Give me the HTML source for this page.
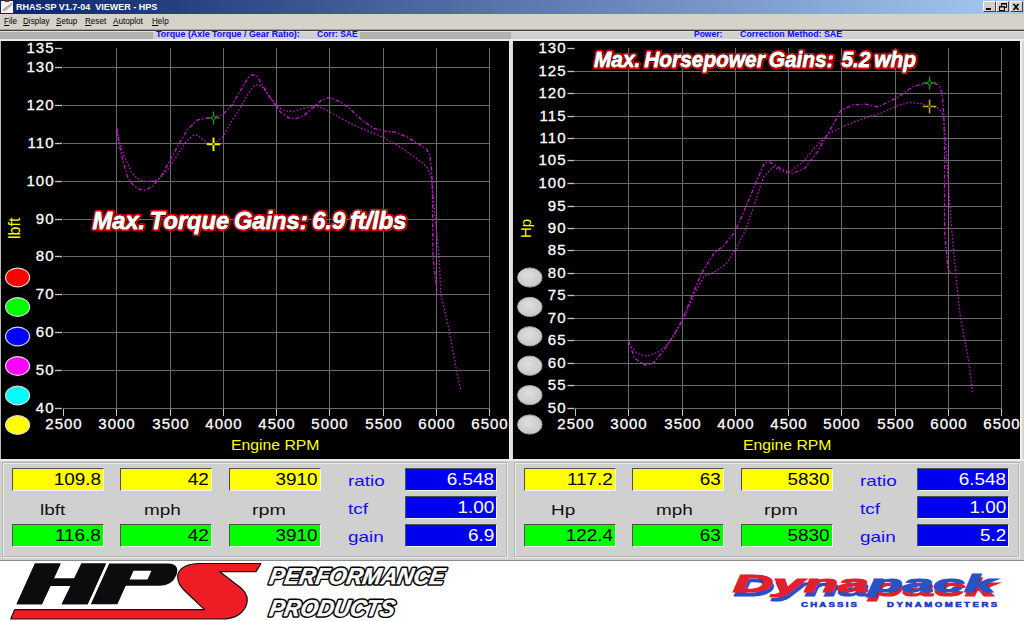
<!DOCTYPE html>
<html><head><meta charset="utf-8">
<style>
*{margin:0;padding:0;box-sizing:border-box}
html,body{width:1024px;height:621px;overflow:hidden;background:#fff;font-family:"Liberation Sans", sans-serif}
.abs{position:absolute}
.yl{position:absolute;width:41px;text-align:right;color:#fff;font-size:15px;line-height:18px;letter-spacing:1px;-webkit-text-stroke:0.3px #fff}
.xl{position:absolute;width:51px;text-align:center;color:#fff;font-size:15px;line-height:18px;letter-spacing:1px;-webkit-text-stroke:0.3px #fff}
.box{position:absolute;height:23px;border-top:1px solid #505050;border-left:1px solid #505050;border-bottom:1px solid #f4f4f4;border-right:1px solid #f4f4f4;text-align:right;font-size:16px;line-height:21px;padding-right:2px;color:#000}
.box span{display:inline-block;transform:scaleX(1.18);transform-origin:100% 50%}
.lab span,.blab span{display:inline-block;transform:scaleX(1.26);transform-origin:0 50%}
.y{background:#ffff00} .g{background:#00ff00} .b{background:#0000f0;color:#fff}
.lab{position:absolute;font-size:15px;line-height:18px;color:#111}
.blab{position:absolute;font-size:15px;line-height:18px;color:#0e0ef8}
.menu span{position:absolute;top:15px;font-size:9px;line-height:12px;color:#000;transform:scaleX(0.9);transform-origin:0 0}
.menu u{text-decoration:none;border-bottom:1px solid #000;line-height:8px;display:inline-block}
.hdr{position:absolute;top:30.3px;transform-origin:0 0;height:8px;font-size:8.5px;font-weight:bold;line-height:8px;color:#0a0aff;white-space:pre}
.big{position:absolute;font-weight:bold;font-style:italic;color:#fff;white-space:pre;
  text-shadow:0 0 1px #000, 1.5px 0 0 #d00000,-1.5px 0 0 #d00000,0 1.5px 0 #d00000,0 -1.5px 0 #d00000,1px 1px 0 #d00000,-1px -1px 0 #d00000,1px -1px 0 #d00000,-1px 1px 0 #d00000, 2px 1px 0 #a00000, -2px 1px 0 #a00000, 1px 2px 0 #a00000,-1px 2px 0 #a00000}
</style></head><body>

<div class="abs" style="left:0;top:0;width:1024px;height:14px;background:linear-gradient(90deg,#0a246a 0%,#a6caf0 100%)"></div>
<div class="abs" style="left:1px;top:1px;width:12px;height:12px;background:#f8f6f4"></div><div class="abs" style="left:5px;top:0;width:4px;height:2px;background:#902018"></div>
<svg class="abs" style="left:0;top:0" width="14" height="14"><polyline points="2.5,10.5 6,8 9,6 12,3" fill="none" stroke="#f08080" stroke-width="1.2"/><polyline points="3,9.5 7,6.5 10,5" fill="none" stroke="#90c890" stroke-width="1"/><polyline points="4,11 8,8.5 12,4.5" fill="none" stroke="#9090e0" stroke-width="1"/></svg>
<div class="abs" style="left:16px;top:0.8px;font-size:9px;line-height:12px;font-weight:bold;color:#fff;white-space:pre">RHAS-SP V1.7-04  VIEWER - HPS</div>

<div class="abs" style="left:983px;top:1px;width:13px;height:11px;background:#d4d0c8;border-top:1px solid #fff;border-left:1px solid #fff;border-right:1px solid #404040;border-bottom:1px solid #404040"></div>
<div class="abs" style="left:996px;top:1px;width:13px;height:11px;background:#d4d0c8;border-top:1px solid #fff;border-left:1px solid #fff;border-right:1px solid #404040;border-bottom:1px solid #404040"></div>
<div class="abs" style="left:1010px;top:1px;width:13px;height:11px;background:#d4d0c8;border-top:1px solid #fff;border-left:1px solid #fff;border-right:1px solid #404040;border-bottom:1px solid #404040"></div>
<svg class="abs" style="left:983px;top:1px" width="41" height="12">
<rect x="3" y="7" width="5" height="2" fill="#000"/>
<rect x="16.5" y="5.5" width="5" height="4" fill="none" stroke="#000" stroke-width="1"/><line x1="16" y1="6" x2="22" y2="6" stroke="#000"/>
<polyline points="18.5,5.5 18.5,2.5 23.5,2.5 23.5,6.5 22,6.5" fill="none" stroke="#000"/><line x1="18" y1="3" x2="24" y2="3" stroke="#000"/>
<path d="M30.5,3 L35.5,9 M35.5,3 L30.5,9" stroke="#000" stroke-width="1.6"/>
</svg>

<div class="abs" style="left:0;top:14px;width:1024px;height:16px;background:#d6d2ca"></div>
<div class="abs" style="left:0;top:29px;width:1024px;height:1px;background:#a8a49c"></div>
<div class="abs" style="left:0;top:30px;width:1024px;height:1px;background:#404040"></div>
<div class="menu">
<span style="left:4px"><u>F</u>ile</span>
<span style="left:22.5px"><u>D</u>isplay</span>
<span style="left:56px"><u>S</u>etup</span>
<span style="left:84.7px"><u>R</u>eset</span>
<span style="left:112.5px"><u>A</u>utoplot</span>
<span style="left:151.5px"><u>H</u>elp</span>
</div>
<div class="abs" style="left:0;top:31px;width:1024px;height:9px;background:#d0d0d0"></div>
<div class="abs" style="left:0;top:31px;width:1024px;height:1px;background:#e0e0e0"></div>
<div class="abs" style="left:0;top:32px;width:153px;height:7px;background:#b2b2b2"></div>
<div class="abs" style="left:360px;top:32px;width:151px;height:7px;background:#b2b2b2"></div>
<div class="hdr" style="left:156px;transform:scaleX(1.045)">Torque (Axle Torque / Gear Ratio):</div>
<div class="hdr" style="left:317px">Corr: SAE</div>
<div class="hdr" style="left:694px">Power:</div>
<div class="hdr" style="left:740px;transform:scaleX(1.04)">Correction Method: SAE</div>
<div class="abs" style="left:0;top:39px;width:1024px;height:421px;background:#d4d4d4"></div>
<div class="abs" style="left:0;top:39px;width:1024px;height:2px;background:#ececec"></div>
<div class="abs" style="left:0;top:41px;width:1px;height:419px;background:#b8b8b8"></div>
<div class="abs" style="left:1020px;top:41px;width:2px;height:419px;background:#f0f0f0"></div>
<div class="abs" style="left:1px;top:41px;width:508px;height:418px;background:#000"></div>
<div class="abs" style="left:513px;top:41px;width:507px;height:418px;background:#000"></div>
<div class="abs" style="left:509px;top:41px;width:3px;height:418px;background:#e4e4e4"></div>
<svg class="abs" style="left:0;top:0" width="1024" height="621">
<line x1="63.0" y1="408.5" x2="490.0" y2="408.5" stroke="#6a6a6a" stroke-width="1"/>
<line x1="63.0" y1="370.5" x2="490.0" y2="370.5" stroke="#6a6a6a" stroke-width="1"/>
<line x1="63.0" y1="332.5" x2="490.0" y2="332.5" stroke="#6a6a6a" stroke-width="1"/>
<line x1="63.0" y1="294.5" x2="490.0" y2="294.5" stroke="#6a6a6a" stroke-width="1"/>
<line x1="63.0" y1="256.5" x2="490.0" y2="256.5" stroke="#6a6a6a" stroke-width="1"/>
<line x1="63.0" y1="219.5" x2="490.0" y2="219.5" stroke="#6a6a6a" stroke-width="1"/>
<line x1="63.0" y1="181.5" x2="490.0" y2="181.5" stroke="#6a6a6a" stroke-width="1"/>
<line x1="63.0" y1="143.5" x2="490.0" y2="143.5" stroke="#6a6a6a" stroke-width="1"/>
<line x1="63.0" y1="105.5" x2="490.0" y2="105.5" stroke="#6a6a6a" stroke-width="1"/>
<line x1="63.0" y1="67.5" x2="490.0" y2="67.5" stroke="#6a6a6a" stroke-width="1"/>
<line x1="55" y1="48.5" x2="62" y2="48.5" stroke="#c4c4c4" stroke-width="1.3"/>
<line x1="55" y1="408.5" x2="62" y2="408.5" stroke="#c4c4c4" stroke-width="1.3"/>
<line x1="55" y1="370.5" x2="62" y2="370.5" stroke="#c4c4c4" stroke-width="1.3"/>
<line x1="55" y1="332.5" x2="62" y2="332.5" stroke="#c4c4c4" stroke-width="1.3"/>
<line x1="55" y1="294.5" x2="62" y2="294.5" stroke="#c4c4c4" stroke-width="1.3"/>
<line x1="55" y1="256.5" x2="62" y2="256.5" stroke="#c4c4c4" stroke-width="1.3"/>
<line x1="55" y1="219.5" x2="62" y2="219.5" stroke="#c4c4c4" stroke-width="1.3"/>
<line x1="55" y1="181.5" x2="62" y2="181.5" stroke="#c4c4c4" stroke-width="1.3"/>
<line x1="55" y1="143.5" x2="62" y2="143.5" stroke="#c4c4c4" stroke-width="1.3"/>
<line x1="55" y1="105.5" x2="62" y2="105.5" stroke="#c4c4c4" stroke-width="1.3"/>
<line x1="55" y1="67.5" x2="62" y2="67.5" stroke="#c4c4c4" stroke-width="1.3"/>
<line x1="63.5" y1="408.0" x2="63.5" y2="408.0" stroke="#6a6a6a" stroke-width="1"/>
<line x1="63.5" y1="409.0" x2="63.5" y2="416.0" stroke="#c4c4c4" stroke-width="1"/>
<line x1="116.5" y1="48.0" x2="116.5" y2="408.0" stroke="#6a6a6a" stroke-width="1"/>
<line x1="116.5" y1="409.0" x2="116.5" y2="416.0" stroke="#c4c4c4" stroke-width="1"/>
<line x1="170.5" y1="48.0" x2="170.5" y2="408.0" stroke="#6a6a6a" stroke-width="1"/>
<line x1="170.5" y1="409.0" x2="170.5" y2="416.0" stroke="#c4c4c4" stroke-width="1"/>
<line x1="223.5" y1="48.0" x2="223.5" y2="408.0" stroke="#6a6a6a" stroke-width="1"/>
<line x1="223.5" y1="409.0" x2="223.5" y2="416.0" stroke="#c4c4c4" stroke-width="1"/>
<line x1="276.5" y1="48.0" x2="276.5" y2="408.0" stroke="#6a6a6a" stroke-width="1"/>
<line x1="276.5" y1="409.0" x2="276.5" y2="416.0" stroke="#c4c4c4" stroke-width="1"/>
<line x1="329.5" y1="48.0" x2="329.5" y2="408.0" stroke="#6a6a6a" stroke-width="1"/>
<line x1="329.5" y1="409.0" x2="329.5" y2="416.0" stroke="#c4c4c4" stroke-width="1"/>
<line x1="383.5" y1="48.0" x2="383.5" y2="408.0" stroke="#6a6a6a" stroke-width="1"/>
<line x1="383.5" y1="409.0" x2="383.5" y2="416.0" stroke="#c4c4c4" stroke-width="1"/>
<line x1="436.5" y1="48.0" x2="436.5" y2="408.0" stroke="#6a6a6a" stroke-width="1"/>
<line x1="436.5" y1="409.0" x2="436.5" y2="416.0" stroke="#c4c4c4" stroke-width="1"/>
<line x1="489.5" y1="48.0" x2="489.5" y2="408.0" stroke="#6a6a6a" stroke-width="1"/>
<line x1="489.5" y1="409.0" x2="489.5" y2="416.0" stroke="#c4c4c4" stroke-width="1"/>
<line x1="575.0" y1="408.5" x2="1002.0" y2="408.5" stroke="#6a6a6a" stroke-width="1"/>
<line x1="575.0" y1="385.5" x2="1002.0" y2="385.5" stroke="#6a6a6a" stroke-width="1"/>
<line x1="575.0" y1="363.5" x2="1002.0" y2="363.5" stroke="#6a6a6a" stroke-width="1"/>
<line x1="575.0" y1="340.5" x2="1002.0" y2="340.5" stroke="#6a6a6a" stroke-width="1"/>
<line x1="575.0" y1="318.5" x2="1002.0" y2="318.5" stroke="#6a6a6a" stroke-width="1"/>
<line x1="575.0" y1="295.5" x2="1002.0" y2="295.5" stroke="#6a6a6a" stroke-width="1"/>
<line x1="575.0" y1="273.5" x2="1002.0" y2="273.5" stroke="#6a6a6a" stroke-width="1"/>
<line x1="575.0" y1="250.5" x2="1002.0" y2="250.5" stroke="#6a6a6a" stroke-width="1"/>
<line x1="575.0" y1="228.5" x2="1002.0" y2="228.5" stroke="#6a6a6a" stroke-width="1"/>
<line x1="575.0" y1="206.5" x2="1002.0" y2="206.5" stroke="#6a6a6a" stroke-width="1"/>
<line x1="575.0" y1="183.5" x2="1002.0" y2="183.5" stroke="#6a6a6a" stroke-width="1"/>
<line x1="575.0" y1="160.5" x2="1002.0" y2="160.5" stroke="#6a6a6a" stroke-width="1"/>
<line x1="575.0" y1="138.5" x2="1002.0" y2="138.5" stroke="#6a6a6a" stroke-width="1"/>
<line x1="575.0" y1="116.5" x2="1002.0" y2="116.5" stroke="#6a6a6a" stroke-width="1"/>
<line x1="575.0" y1="93.5" x2="1002.0" y2="93.5" stroke="#6a6a6a" stroke-width="1"/>
<line x1="575.0" y1="71.5" x2="1002.0" y2="71.5" stroke="#6a6a6a" stroke-width="1"/>
<line x1="567.5" y1="408.5" x2="574.5" y2="408.5" stroke="#c4c4c4" stroke-width="1.3"/>
<line x1="567.5" y1="385.5" x2="574.5" y2="385.5" stroke="#c4c4c4" stroke-width="1.3"/>
<line x1="567.5" y1="363.5" x2="574.5" y2="363.5" stroke="#c4c4c4" stroke-width="1.3"/>
<line x1="567.5" y1="340.5" x2="574.5" y2="340.5" stroke="#c4c4c4" stroke-width="1.3"/>
<line x1="567.5" y1="318.5" x2="574.5" y2="318.5" stroke="#c4c4c4" stroke-width="1.3"/>
<line x1="567.5" y1="295.5" x2="574.5" y2="295.5" stroke="#c4c4c4" stroke-width="1.3"/>
<line x1="567.5" y1="273.5" x2="574.5" y2="273.5" stroke="#c4c4c4" stroke-width="1.3"/>
<line x1="567.5" y1="250.5" x2="574.5" y2="250.5" stroke="#c4c4c4" stroke-width="1.3"/>
<line x1="567.5" y1="228.5" x2="574.5" y2="228.5" stroke="#c4c4c4" stroke-width="1.3"/>
<line x1="567.5" y1="206.5" x2="574.5" y2="206.5" stroke="#c4c4c4" stroke-width="1.3"/>
<line x1="567.5" y1="183.5" x2="574.5" y2="183.5" stroke="#c4c4c4" stroke-width="1.3"/>
<line x1="567.5" y1="160.5" x2="574.5" y2="160.5" stroke="#c4c4c4" stroke-width="1.3"/>
<line x1="567.5" y1="138.5" x2="574.5" y2="138.5" stroke="#c4c4c4" stroke-width="1.3"/>
<line x1="567.5" y1="116.5" x2="574.5" y2="116.5" stroke="#c4c4c4" stroke-width="1.3"/>
<line x1="567.5" y1="93.5" x2="574.5" y2="93.5" stroke="#c4c4c4" stroke-width="1.3"/>
<line x1="567.5" y1="71.5" x2="574.5" y2="71.5" stroke="#c4c4c4" stroke-width="1.3"/>
<line x1="567.5" y1="48.5" x2="574.5" y2="48.5" stroke="#c4c4c4" stroke-width="1.3"/>
<line x1="575.5" y1="408.0" x2="575.5" y2="408.0" stroke="#6a6a6a" stroke-width="1"/>
<line x1="575.5" y1="409.0" x2="575.5" y2="416.0" stroke="#c4c4c4" stroke-width="1"/>
<line x1="628.5" y1="48.0" x2="628.5" y2="408.0" stroke="#6a6a6a" stroke-width="1"/>
<line x1="628.5" y1="409.0" x2="628.5" y2="416.0" stroke="#c4c4c4" stroke-width="1"/>
<line x1="682.5" y1="48.0" x2="682.5" y2="408.0" stroke="#6a6a6a" stroke-width="1"/>
<line x1="682.5" y1="409.0" x2="682.5" y2="416.0" stroke="#c4c4c4" stroke-width="1"/>
<line x1="735.5" y1="48.0" x2="735.5" y2="408.0" stroke="#6a6a6a" stroke-width="1"/>
<line x1="735.5" y1="409.0" x2="735.5" y2="416.0" stroke="#c4c4c4" stroke-width="1"/>
<line x1="788.5" y1="48.0" x2="788.5" y2="408.0" stroke="#6a6a6a" stroke-width="1"/>
<line x1="788.5" y1="409.0" x2="788.5" y2="416.0" stroke="#c4c4c4" stroke-width="1"/>
<line x1="841.5" y1="48.0" x2="841.5" y2="408.0" stroke="#6a6a6a" stroke-width="1"/>
<line x1="841.5" y1="409.0" x2="841.5" y2="416.0" stroke="#c4c4c4" stroke-width="1"/>
<line x1="895.5" y1="48.0" x2="895.5" y2="408.0" stroke="#6a6a6a" stroke-width="1"/>
<line x1="895.5" y1="409.0" x2="895.5" y2="416.0" stroke="#c4c4c4" stroke-width="1"/>
<line x1="948.5" y1="48.0" x2="948.5" y2="408.0" stroke="#6a6a6a" stroke-width="1"/>
<line x1="948.5" y1="409.0" x2="948.5" y2="416.0" stroke="#c4c4c4" stroke-width="1"/>
<line x1="1001.5" y1="48.0" x2="1001.5" y2="408.0" stroke="#6a6a6a" stroke-width="1"/>
<line x1="1001.5" y1="409.0" x2="1001.5" y2="416.0" stroke="#c4c4c4" stroke-width="1"/>
<polyline points="116.8,127.7 118.0,136.8 119.0,143.2 120.9,152.3 124.1,165.2 128.0,178.0 133.8,185.8 140.3,189.7 145.0,190.2 151.9,187.0 161.5,175.7 171.2,158.0 179.2,143.5 187.3,129.8 197.0,120.1 206.6,118.0 213.0,118.0 222.7,114.5 231.3,105.9 240.9,89.8 248.2,77.7 252.2,74.8 257.0,76.1 261.9,84.2 268.3,95.4 275.6,105.1 281.2,113.1 289.2,118.0 295.7,118.8 303.7,115.6 313.4,107.5 321.4,100.3 329.5,97.4 341.3,102.5 350.9,109.8 362.2,120.3 373.5,128.3 384.8,131.2 394.4,131.9 405.7,136.4 417.0,142.8 426.6,149.2 429.8,155.7 431.4,167.0 432.4,184.0 432.6,220.0 433.0,257.0 436.9,291.0" fill="none" stroke="#c414d0" stroke-width="1.3" stroke-dasharray="4 2 1.5 2"/>
<polyline points="116.8,128.0 118.5,137.0 119.8,142.5 121.5,149.0 125.4,158.7 131.2,171.6 135.0,176.5 140.3,180.0 146.7,181.7 158.3,179.7 168.0,169.2 177.6,154.7 185.7,141.9 193.7,135.1 197.8,135.4 206.6,142.7 213.0,144.3 222.7,137.0 229.7,124.4 240.9,106.7 249.0,92.2 255.4,84.5 261.9,86.6 268.3,94.6 276.4,105.9 284.4,110.7 292.5,111.5 303.7,108.3 316.6,105.9 326.3,109.9 341.3,118.6 354.2,125.1 367.0,130.7 383.1,137.2 397.6,145.2 410.5,154.1 421.8,162.1 426.6,167.0 431.1,176.0 434.3,208.3 436.7,232.5 439.2,257.0 440.8,293.8 448.5,327.3 456.2,368.6 460.9,390.5" fill="none" stroke="#c414d0" stroke-width="1.3" stroke-dasharray="1.5 2"/>
<polyline points="628.8,341.2 634.3,358.1 645.2,365.3 653.7,362.9 667.0,346.0 682.7,319.4 692.3,295.3 702.0,272.3 714.1,253.0 723.8,245.7 734.6,232.4 744.2,210.8 756.3,181.8 764.7,162.5 770.8,162.5 780.4,168.5 792.5,173.4 804.6,168.5 816.7,152.8 828.8,132.3 840.8,110.5 852.9,105.0 865.0,104.0 878.0,106.9 896.0,98.3 914.1,85.9 929.9,83.0 938.9,84.8 942.3,93.8 943.9,116.4 944.5,150.2 944.5,197.0 944.6,233.0 946.8,254.0 947.7,268.5 949.0,271.5 953.0,273.8" fill="none" stroke="#c414d0" stroke-width="1.3" stroke-dasharray="4 2 1.5 2"/>
<polyline points="628.8,343.6 636.8,353.3 646.4,356.2 658.5,352.0 670.6,341.2 682.7,320.6 694.8,292.8 704.4,275.9 714.1,272.3 726.2,263.8 735.8,249.3 745.5,230.0 753.8,206.0 763.5,177.0 773.2,166.9 787.7,173.4 802.2,162.5 816.7,145.6 828.8,133.5 840.8,127.5 855.3,121.4 869.8,116.6 880.0,113.7 896.0,106.2 909.6,102.4 923.1,104.0 929.9,106.2 938.9,108.5 943.0,114.1 944.5,127.6 946.8,161.4 948.2,180.0 951.2,224.0 953.9,254.3 956.5,282.7 960.6,318.5 969.0,362.5 972.4,393.0" fill="none" stroke="#c414d0" stroke-width="1.3" stroke-dasharray="1.5 2"/>
<path d="M207.0,118 H220.0 M213.5,111.5 V124.5" stroke="#10a810" stroke-width="1.2"/><ellipse cx="213.5" cy="118" rx="1.7" ry="2.2" fill="#000" stroke="#10a810" stroke-width="1"/>
<path d="M206.7,144.2 H220.3 M213.5,137.39999999999998 V151.0" stroke="#f4ec00" stroke-width="2.0"/><circle cx="213.5" cy="144.2" r="1.1" fill="#302800"/>
<path d="M923.1,82.9 H936.1 M929.6,76.4 V89.4" stroke="#10a810" stroke-width="1.2"/><ellipse cx="929.6" cy="82.9" rx="1.7" ry="2.2" fill="#000" stroke="#10a810" stroke-width="1"/>
<path d="M922.8000000000001,106.4 H936.4 M929.6,99.60000000000001 V113.2" stroke="#c0b428" stroke-width="1.5"/><circle cx="929.6" cy="106.4" r="1.1" fill="#302800"/>
<ellipse cx="17.6" cy="277.5" rx="12" ry="9.4" fill="#ff0000" stroke="#d8d8d8" stroke-width="1.2"/>
<ellipse cx="17.6" cy="307.0" rx="12" ry="9.4" fill="#00ff00" stroke="#d8d8d8" stroke-width="1.2"/>
<ellipse cx="17.6" cy="336.5" rx="12" ry="9.4" fill="#0000ff" stroke="#d8d8d8" stroke-width="1.2"/>
<ellipse cx="17.6" cy="366.0" rx="12" ry="9.4" fill="#ff00ff" stroke="#d8d8d8" stroke-width="1.2"/>
<ellipse cx="17.6" cy="395.5" rx="12" ry="9.4" fill="#00ffff" stroke="#d8d8d8" stroke-width="1.2"/>
<ellipse cx="17.6" cy="425.0" rx="12" ry="9.4" fill="#ffff00" stroke="#d8d8d8" stroke-width="1.2"/>
<defs><radialGradient id="gg" cx="0.45" cy="0.4" r="0.7"><stop offset="0" stop-color="#dedede"/><stop offset="1" stop-color="#c4c4c4"/></radialGradient></defs>
<ellipse cx="529.8" cy="277.5" rx="12.2" ry="9.6" fill="url(#gg)" stroke="#a8a8a8" stroke-width="1"/>
<ellipse cx="529.8" cy="306.9" rx="12.2" ry="9.6" fill="url(#gg)" stroke="#a8a8a8" stroke-width="1"/>
<ellipse cx="529.8" cy="336.3" rx="12.2" ry="9.6" fill="url(#gg)" stroke="#a8a8a8" stroke-width="1"/>
<ellipse cx="529.8" cy="365.7" rx="12.2" ry="9.6" fill="url(#gg)" stroke="#a8a8a8" stroke-width="1"/>
<ellipse cx="529.8" cy="395.1" rx="12.2" ry="9.6" fill="url(#gg)" stroke="#a8a8a8" stroke-width="1"/>
<ellipse cx="529.8" cy="424.5" rx="12.2" ry="9.6" fill="url(#gg)" stroke="#a8a8a8" stroke-width="1"/>
</svg>
<div class="yl" style="left:13.5px;top:39.0px">135</div>
<div class="yl" style="left:13.5px;top:399.0px">40</div>
<div class="yl" style="left:13.5px;top:361.0px">50</div>
<div class="yl" style="left:13.5px;top:323.0px">60</div>
<div class="yl" style="left:13.5px;top:285.0px">70</div>
<div class="yl" style="left:13.5px;top:247.0px">80</div>
<div class="yl" style="left:13.5px;top:210.0px">90</div>
<div class="yl" style="left:13.5px;top:172.0px">100</div>
<div class="yl" style="left:13.5px;top:134.0px">110</div>
<div class="yl" style="left:13.5px;top:96.0px">120</div>
<div class="yl" style="left:13.5px;top:58.0px">130</div>
<div class="xl" style="left:38.5px;top:414.6px">2500</div>
<div class="xl" style="left:91.5px;top:414.6px">3000</div>
<div class="xl" style="left:145.5px;top:414.6px">3500</div>
<div class="xl" style="left:198.5px;top:414.6px">4000</div>
<div class="xl" style="left:251.5px;top:414.6px">4500</div>
<div class="xl" style="left:304.5px;top:414.6px">5000</div>
<div class="xl" style="left:358.5px;top:414.6px">5500</div>
<div class="xl" style="left:411.5px;top:414.6px">6000</div>
<div class="xl" style="left:464.5px;top:414.6px">6500</div>
<div class="yl" style="left:525.5px;top:399.0px">50</div>
<div class="yl" style="left:525.5px;top:376.0px">55</div>
<div class="yl" style="left:525.5px;top:354.0px">60</div>
<div class="yl" style="left:525.5px;top:331.0px">65</div>
<div class="yl" style="left:525.5px;top:309.0px">70</div>
<div class="yl" style="left:525.5px;top:286.0px">75</div>
<div class="yl" style="left:525.5px;top:264.0px">80</div>
<div class="yl" style="left:525.5px;top:241.0px">85</div>
<div class="yl" style="left:525.5px;top:219.0px">90</div>
<div class="yl" style="left:525.5px;top:197.0px">95</div>
<div class="yl" style="left:525.5px;top:174.0px">100</div>
<div class="yl" style="left:525.5px;top:151.0px">105</div>
<div class="yl" style="left:525.5px;top:129.0px">110</div>
<div class="yl" style="left:525.5px;top:107.0px">115</div>
<div class="yl" style="left:525.5px;top:84.0px">120</div>
<div class="yl" style="left:525.5px;top:62.0px">125</div>
<div class="yl" style="left:525.5px;top:39.0px">130</div>
<div class="xl" style="left:550.5px;top:414.6px">2500</div>
<div class="xl" style="left:603.5px;top:414.6px">3000</div>
<div class="xl" style="left:657.5px;top:414.6px">3500</div>
<div class="xl" style="left:710.5px;top:414.6px">4000</div>
<div class="xl" style="left:763.5px;top:414.6px">4500</div>
<div class="xl" style="left:816.5px;top:414.6px">5000</div>
<div class="xl" style="left:870.5px;top:414.6px">5500</div>
<div class="xl" style="left:923.5px;top:414.6px">6000</div>
<div class="xl" style="left:976.5px;top:414.6px">6500</div>
<div class="abs" style="left:231.3px;top:436px;font-size:15px;line-height:18px;color:#ffff00;transform:scaleX(1.05);transform-origin:0 0">Engine RPM</div>
<div class="abs" style="left:743.1px;top:436px;font-size:15px;line-height:18px;color:#ffff00;transform:scaleX(1.05);transform-origin:0 0">Engine RPM</div>
<div class="abs" style="left:5.5px;top:219px;width:20px;height:20px;font-size:16px;line-height:18px;color:#ffff00;transform:rotate(-90deg);transform-origin:10px 10px;white-space:pre">lbft</div>
<div class="abs" style="left:517px;top:218px;width:20px;height:20px;font-size:15px;line-height:18px;color:#ffff00;transform:rotate(-90deg);transform-origin:10px 10px;white-space:pre">Hp</div>
<svg class="abs" style="left:0;top:0" width="1024" height="621"><text x="92.5" y="228.6" font-family="Liberation Sans" font-weight="bold" font-style="italic" font-size="24.5" textLength="314" lengthAdjust="spacingAndGlyphs" word-spacing="-2" xml:space="preserve" fill="#e00000" stroke="#e00000" stroke-width="4.4" stroke-linejoin="round">Max. Torque Gains: 6.9 ft/lbs</text><text x="92.5" y="228.6" font-family="Liberation Sans" font-weight="bold" font-style="italic" font-size="24.5" textLength="314" lengthAdjust="spacingAndGlyphs" word-spacing="-2" xml:space="preserve" fill="#fff" stroke="#300000" stroke-width="2.0" stroke-linejoin="round">Max. Torque Gains: 6.9 ft/lbs</text><text x="92.5" y="228.6" font-family="Liberation Sans" font-weight="bold" font-style="italic" font-size="24.5" textLength="314" lengthAdjust="spacingAndGlyphs" word-spacing="-2" xml:space="preserve" fill="#fff" stroke="#fff" stroke-width="0.8" stroke-linejoin="round">Max. Torque Gains: 6.9 ft/lbs</text></svg>
<svg class="abs" style="left:0;top:0" width="1024" height="621"><text x="594" y="67.3" font-family="Liberation Sans" font-weight="bold" font-style="italic" font-size="22" textLength="322" lengthAdjust="spacingAndGlyphs" word-spacing="-2" xml:space="preserve" fill="#e00000" stroke="#e00000" stroke-width="4.4" stroke-linejoin="round">Max. Horsepower Gains:  5.2 whp</text><text x="594" y="67.3" font-family="Liberation Sans" font-weight="bold" font-style="italic" font-size="22" textLength="322" lengthAdjust="spacingAndGlyphs" word-spacing="-2" xml:space="preserve" fill="#fff" stroke="#300000" stroke-width="2.0" stroke-linejoin="round">Max. Horsepower Gains:  5.2 whp</text><text x="594" y="67.3" font-family="Liberation Sans" font-weight="bold" font-style="italic" font-size="22" textLength="322" lengthAdjust="spacingAndGlyphs" word-spacing="-2" xml:space="preserve" fill="#fff" stroke="#fff" stroke-width="0.8" stroke-linejoin="round">Max. Horsepower Gains:  5.2 whp</text></svg>
<div class="abs" style="left:0;top:459px;width:1024px;height:102px;background:#d0d0d0;border-top:2px solid #ececec"></div>
<div class="abs" style="left:2px;top:462px;width:505px;height:95px;border:1px solid #b4b4b4;box-shadow:inset 1px 1px 0 #ececec, 1px 1px 0 #ececec"></div>
<div class="abs" style="left:514px;top:462px;width:505px;height:95px;border:1px solid #b4b4b4;box-shadow:inset 1px 1px 0 #ececec, 1px 1px 0 #ececec"></div>
<div class="box y" style="left:12px;top:468px;width:92px"><span>109.8</span></div>
<div class="box y" style="left:120px;top:468px;width:92px"><span>42</span></div>
<div class="box y" style="left:229px;top:468px;width:92px"><span>3910</span></div>
<div class="box g" style="left:12px;top:524px;width:92px"><span>116.8</span></div>
<div class="box g" style="left:120px;top:524px;width:92px"><span>42</span></div>
<div class="box g" style="left:229px;top:524px;width:92px"><span>3910</span></div>
<div class="box b" style="left:405px;top:468px;width:92px"><span>6.548</span></div>
<div class="box b" style="left:405px;top:496px;width:92px"><span>1.00</span></div>
<div class="box b" style="left:405px;top:524px;width:92px"><span>6.9</span></div>
<div class="box y" style="left:524px;top:468px;width:92px"><span>117.2</span></div>
<div class="box y" style="left:632px;top:468px;width:92px"><span>63</span></div>
<div class="box y" style="left:741px;top:468px;width:92px"><span>5830</span></div>
<div class="box g" style="left:524px;top:524px;width:92px"><span>122.4</span></div>
<div class="box g" style="left:632px;top:524px;width:92px"><span>63</span></div>
<div class="box g" style="left:741px;top:524px;width:92px"><span>5830</span></div>
<div class="box b" style="left:917px;top:468px;width:92px"><span>6.548</span></div>
<div class="box b" style="left:917px;top:496px;width:92px"><span>1.00</span></div>
<div class="box b" style="left:917px;top:524px;width:92px"><span>5.2</span></div>
<div class="lab" style="left:39.5px;top:501px"><span>lbft</span></div>
<div class="lab" style="left:143.5px;top:501px"><span>mph</span></div>
<div class="lab" style="left:252px;top:501px"><span style="transform:scaleX(1.31)">rpm</span></div>
<div class="blab" style="left:348px;top:472.4px"><span>ratio</span></div>
<div class="blab" style="left:348px;top:499.8px"><span>tcf</span></div>
<div class="blab" style="left:348px;top:528px"><span>gain</span></div>
<div class="lab" style="left:551px;top:501px"><span>Hp</span></div>
<div class="lab" style="left:655.5px;top:501px"><span>mph</span></div>
<div class="lab" style="left:764px;top:501px"><span style="transform:scaleX(1.31)">rpm</span></div>
<div class="blab" style="left:860px;top:472.4px"><span>ratio</span></div>
<div class="blab" style="left:860px;top:499.8px"><span>tcf</span></div>
<div class="blab" style="left:860px;top:528px"><span>gain</span></div>
<div class="abs" style="left:0;top:560px;width:1024px;height:1px;background:#8c8c8c"></div>
<svg class="abs" style="left:0;top:560px" width="1024" height="61" viewBox="0 560 1024 61">
<g stroke="none" fill="#0c0c0e">
<path d="M34.9,563.6 L60.7,563.6 L53.8,578.5 L88.2,578.5 L81.2,563.6 L106,563.6 L87.6,604.3 L61.6,604.3 L71,586.1 L50.5,586.1 L41.9,604.3 L16.5,604.3 Z"/>
</g>
<path d="M35,563.6 L60.7,563.6 L41.9,604.3 L16.5,604.3 Z M81.2,563.6 L106,563.6 L87.6,604.3 L61.6,604.3 Z M50,578.5 L90,578.5 L86.5,586.1 L46.5,586.1 Z" fill="#0c0c0e"/>
<path d="M109.2,563.6 L168,563.6 Q180,564 176.5,575 Q172,585.7 160,585.7 L125.7,585.7 L117.4,604.3 L90.8,604.3 Z M133.5,570.8 L151.4,570.8 L147.5,579.5 L129.6,579.5 Z" fill="#0c0c0e" fill-rule="evenodd"/>
<path d="M14.6,609.6 L204.5,609.6 L186,592 Q176,583 178,574 Q182,563.5 200,563.5 L261,563.5 L256,571.6 L219.5,571.6 L241,588 Q250,596 246,606 Q240,619 222,619 L10.8,619 Z" fill="#ee1c24" stroke="#111" stroke-width="1.2" stroke-linejoin="round"/>
</svg>
<svg class="abs" style="left:0;top:0" width="1024" height="621"><text x="268.5" y="583.8" font-family="Liberation Sans" font-weight="bold" font-style="italic" font-size="23" textLength="175" lengthAdjust="spacingAndGlyphs" transform="translate(0 583.8) skewX(-10) translate(0 -583.8)" fill="#000" stroke="#000" stroke-width="3.6" stroke-linejoin="round">PERFORMANCE</text><text x="268.5" y="583.8" font-family="Liberation Sans" font-weight="bold" font-style="italic" font-size="23" textLength="175" lengthAdjust="spacingAndGlyphs" transform="translate(0 583.8) skewX(-10) translate(0 -583.8)" fill="#fff" stroke="#fff" stroke-width="0.5">PERFORMANCE</text><text x="268.5" y="616.2" font-family="Liberation Sans" font-weight="bold" font-style="italic" font-size="23" textLength="125" lengthAdjust="spacingAndGlyphs" transform="translate(0 616.2) skewX(-10) translate(0 -616.2)" fill="#000" stroke="#000" stroke-width="3.6" stroke-linejoin="round">PRODUCTS</text><text x="268.5" y="616.2" font-family="Liberation Sans" font-weight="bold" font-style="italic" font-size="23" textLength="125" lengthAdjust="spacingAndGlyphs" transform="translate(0 616.2) skewX(-10) translate(0 -616.2)" fill="#fff" stroke="#fff" stroke-width="0.5">PRODUCTS</text></svg>
<svg class="abs" style="left:0;top:0" width="1024" height="621">
<g font-family="Liberation Sans" font-weight="bold" font-style="italic" font-size="24">
<text x="734" y="595.5" textLength="262" lengthAdjust="spacingAndGlyphs" stroke-width="1.2" xml:space="preserve"><tspan fill="#2a4cc4" stroke="#2a4cc4">Dyna</tspan><tspan fill="#e0202c" stroke="#e0202c">pack</tspan></text>
<text x="733" y="591.7" textLength="262" lengthAdjust="spacingAndGlyphs" stroke-width="1.2" xml:space="preserve"><tspan fill="#e0202c" stroke="#e0202c">Dyna</tspan><tspan fill="#2a52c8" stroke="#2a52c8">pack</tspan></text>
</g>
<g font-family="Liberation Sans" font-weight="bold" font-size="6.4" fill="#1a3cc0" stroke="#1a3cc0" stroke-width="0.5">
<text transform="translate(801 606.8) scale(1.5 1)" x="0" y="0" textLength="37.3" lengthAdjust="spacing">CHASSIS</text>
<text transform="translate(887 606.8) scale(1.5 1)" x="0" y="0" textLength="73.5" lengthAdjust="spacing">DYNAMOMETERS</text>
</g>
</svg>
</body></html>
